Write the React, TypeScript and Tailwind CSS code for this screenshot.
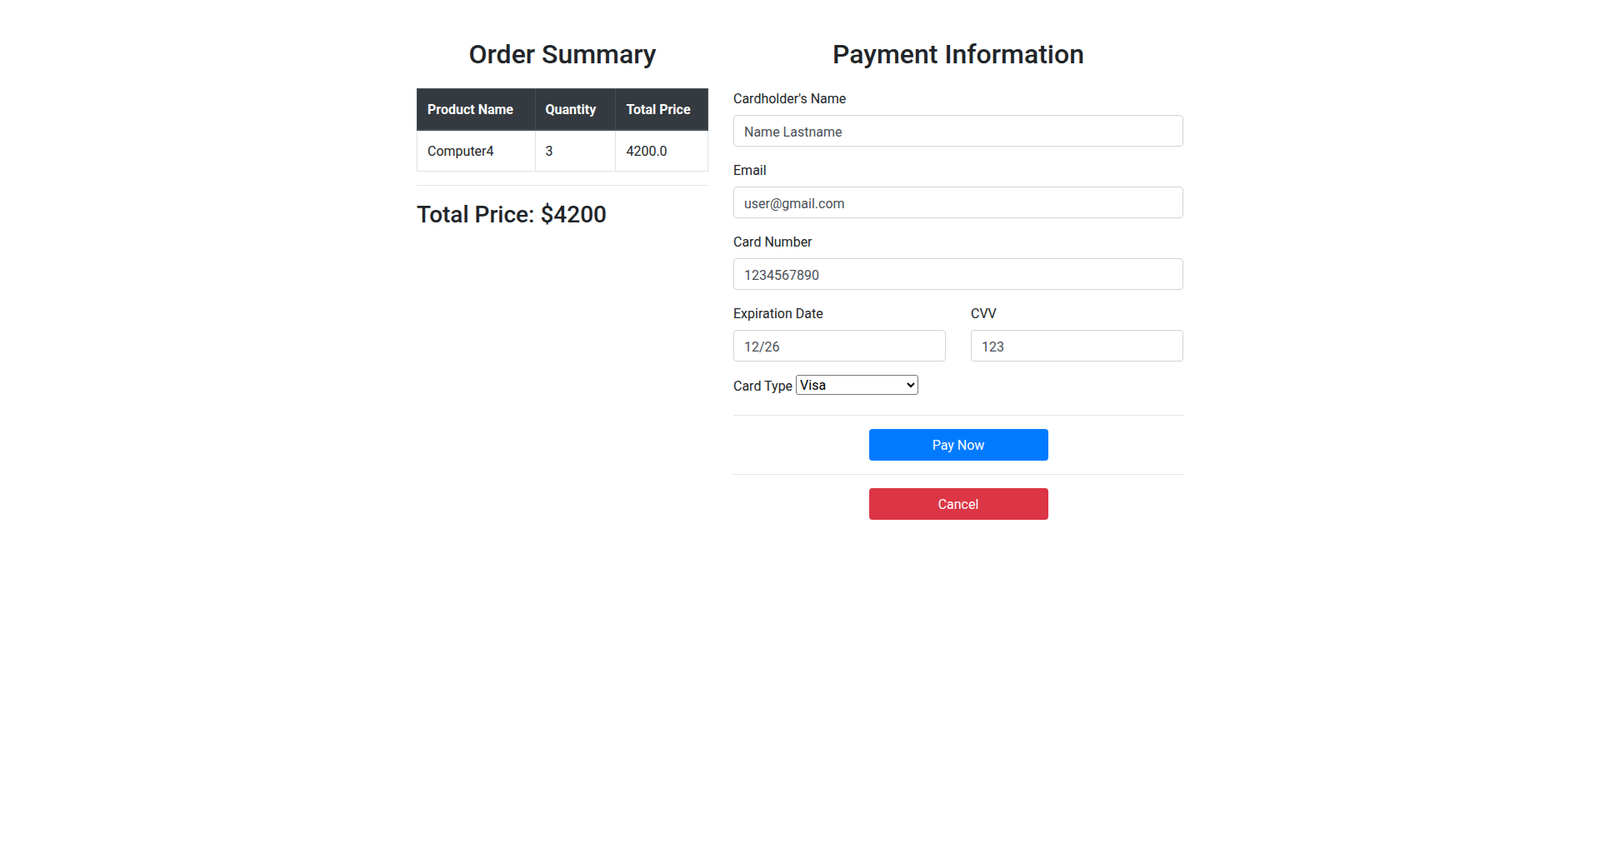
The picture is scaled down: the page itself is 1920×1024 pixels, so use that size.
import React from "react";

function Field({ label, value }: { label: string; value: string }) {
  return (
    <div className="mb-4">
      <label className="block pt-[1px] mb-[7px] leading-6">{label}</label>
      <input
        type="text"
        defaultValue={value}
        className="block w-full h-[38px] px-3 pt-[7px] pb-[5px] text-base leading-6 text-[#495057] bg-white border border-[#ced4da] rounded-[4px] outline-none"
      />
    </div>
  );
}

export default function App() {
  return (
    <div className="min-h-screen bg-white font-['Roboto',sans-serif] text-base leading-6 text-[#212529]">
      <div className="w-[1140px] mx-auto flex justify-center">
        {/* Left column */}
        <div className="w-[380px] px-[15px]">
          <h2 className="mt-[46px] mb-[22px] text-[32px] leading-[38px] font-medium text-center">Order Summary</h2>
          <table className="w-full border border-[#dee2e6] border-collapse">
            <thead>
              <tr className="bg-[#343a40] text-white">
                <th className="w-[142px] px-3 pt-[13px] pb-[11px] text-left font-bold border border-[#454d55] border-b-2">Product Name</th>
                <th className="w-[97px] px-3 pt-[13px] pb-[11px] text-left font-bold border border-[#454d55] border-b-2">Quantity</th>
                <th className="w-[111px] px-3 pt-[13px] pb-[11px] text-left font-bold border border-[#454d55] border-b-2">Total Price</th>
              </tr>
            </thead>
            <tbody>
              <tr>
                <td className="px-3 pt-[13px] pb-[11px] border border-[#dee2e6]">Computer4</td>
                <td className="px-3 pt-[13px] pb-[11px] border border-[#dee2e6]">3</td>
                <td className="px-3 pt-[13px] pb-[11px] border border-[#dee2e6]">4200.0</td>
              </tr>
            </tbody>
          </table>
          <div className="mt-4 h-px bg-[rgba(0,0,0,0.1)]" />
          <h3 className="mt-[18px] text-[28px] leading-[34px] font-medium">Total Price: $4200</h3>
        </div>

        {/* Right column */}
        <div className="w-[570px] px-[15px]">
          <h2 className="mt-[46px] mb-[22px] text-[32px] leading-[38px] font-medium text-center">Payment Information</h2>
          <form onSubmit={(e) => e.preventDefault()}>
            <Field label="Cardholder's Name" value="Name Lastname" />
            <Field label="Email" value="user@gmail.com" />
            <Field label="Card Number" value="1234567890" />
            <div className="flex gap-[30px]">
              <div className="flex-1">
                <Field label="Expiration Date" value="12/26" />
              </div>
              <div className="flex-1">
                <Field label="CVV" value="123" />
              </div>
            </div>
            <div className="h-[32px] flex items-start">
              <label className="pt-[2px] leading-6 mr-[4px]">Card Type</label>
              <select
                defaultValue="Visa"
                className="w-[147px] h-[24px] text-base text-black bg-white border border-[#767676] rounded-[3px]"
              >
                <option>Visa</option>
                <option>MasterCard</option>
                <option>American Express</option>
              </select>
            </div>
            <div className="mt-4 h-px bg-[rgba(0,0,0,0.1)]" />
            <div className="flex justify-center mt-4">
              <button
                type="button"
                className="w-[215px] h-[38px] pt-[2px] rounded-[4px] bg-[#007bff] text-white text-base leading-6"
              >
                Pay Now
              </button>
            </div>
            <div className="mt-4 h-px bg-[rgba(0,0,0,0.1)]" />
            <div className="flex justify-center mt-4">
              <button
                type="button"
                className="w-[215px] h-[38px] pt-[2px] rounded-[4px] bg-[#dc3545] text-white text-base leading-6"
              >
                Cancel
              </button>
            </div>
          </form>
        </div>
      </div>
    </div>
  );
}
